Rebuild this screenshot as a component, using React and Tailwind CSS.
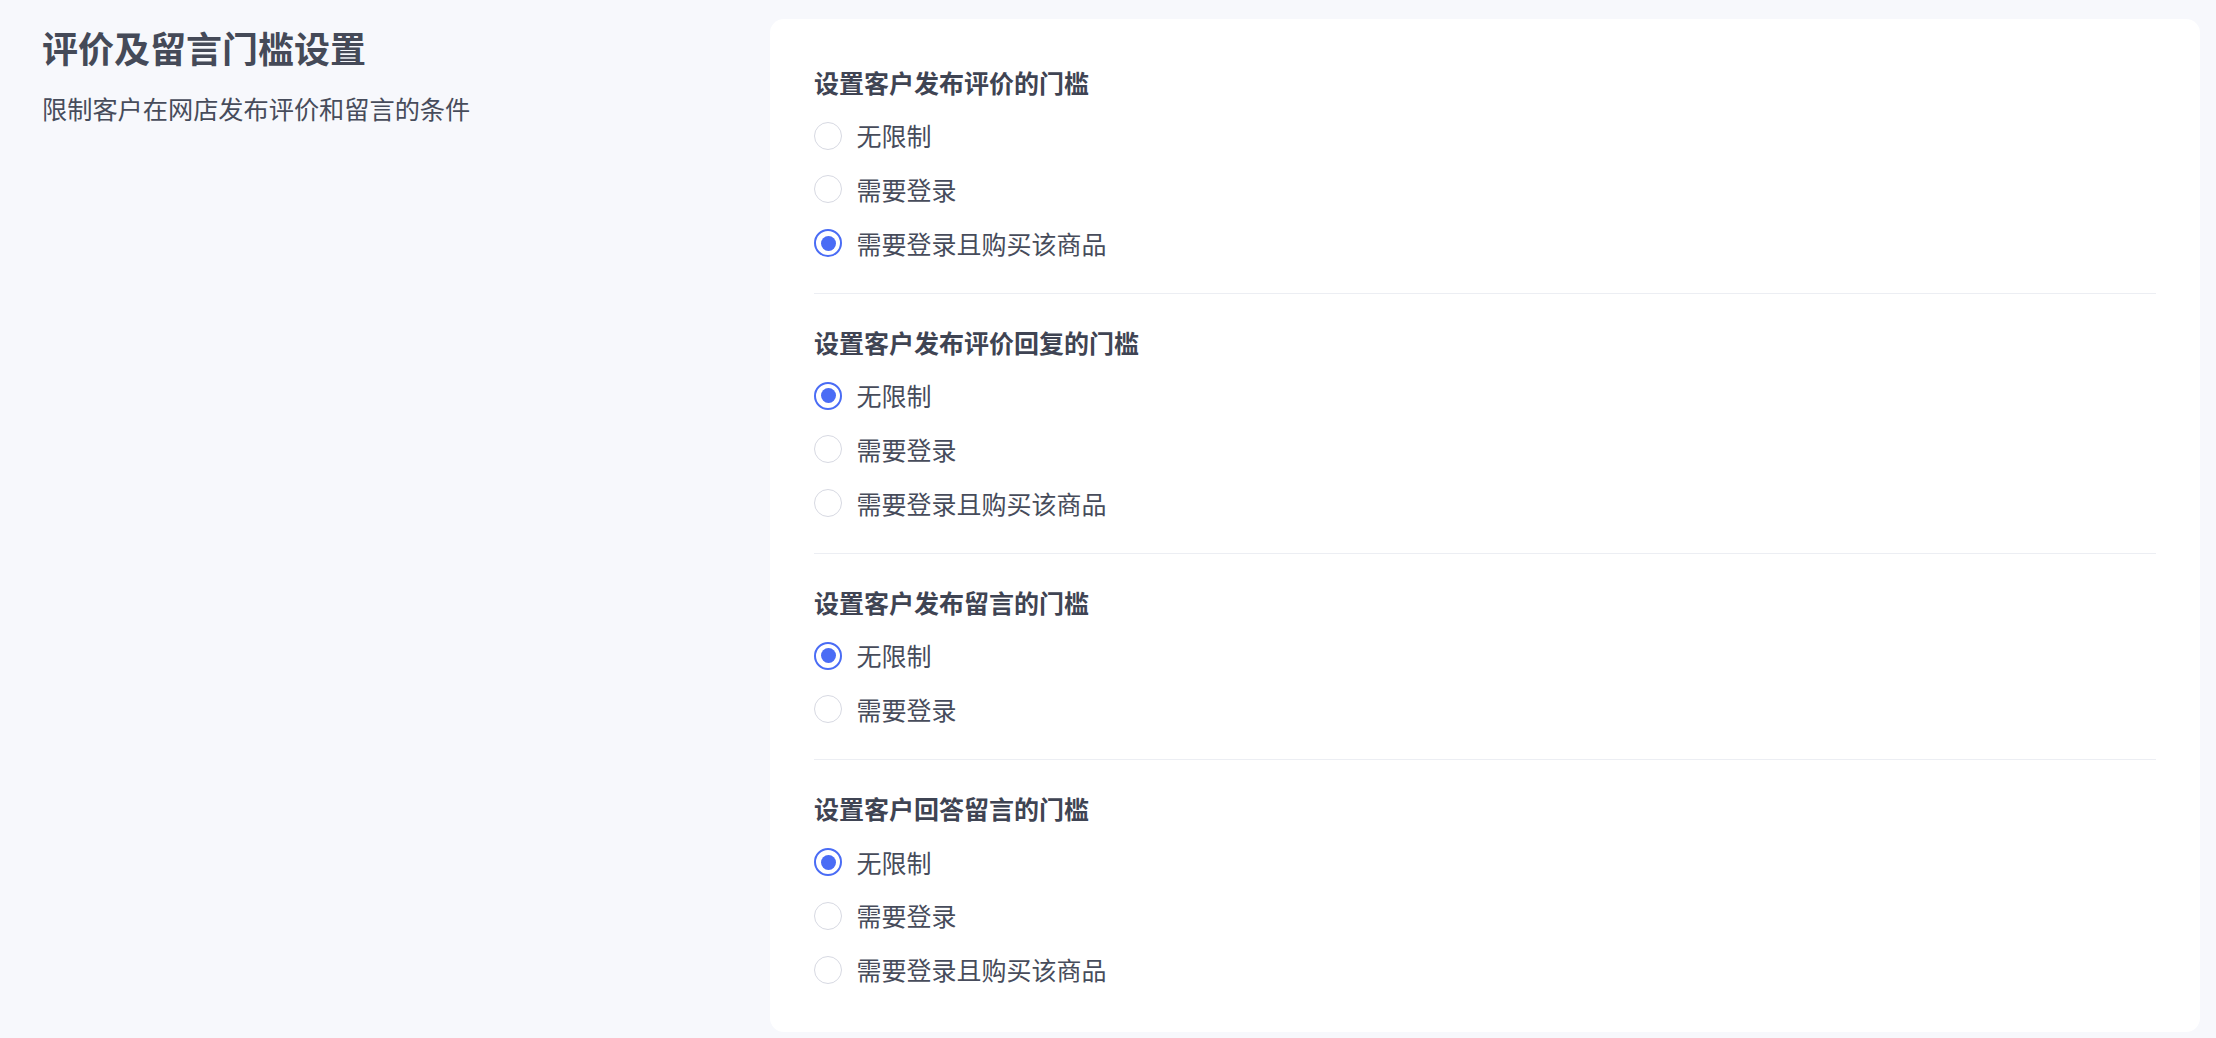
import React, { useState } from 'react';

const font = { fontFamily: '"Noto Sans CJK SC", "Noto Sans", sans-serif' };

const sections = [
  {
    key: 'review',
    title: '设置客户发布评价的门槛',
    options: ['无限制', '需要登录', '需要登录且购买该商品'],
    initial: 2,
  },
  {
    key: 'reviewReply',
    title: '设置客户发布评价回复的门槛',
    options: ['无限制', '需要登录', '需要登录且购买该商品'],
    initial: 0,
  },
  {
    key: 'message',
    title: '设置客户发布留言的门槛',
    options: ['无限制', '需要登录'],
    initial: 0,
  },
  {
    key: 'answer',
    title: '设置客户回答留言的门槛',
    options: ['无限制', '需要登录', '需要登录且购买该商品'],
    initial: 0,
  },
];

const Radio = ({ checked, label, onClick }) => (
  <label
    onClick={onClick}
    className="flex items-center h-[53.7px] cursor-pointer select-none"
  >
    <span
      className={
        checked
          ? 'flex items-center justify-center w-[28px] h-[28px] rounded-full border-[2px] border-[#4a6cf5] bg-white'
          : 'flex items-center justify-center w-[28px] h-[28px] rounded-full border-[1.75px] border-[#d7d9e2] bg-white'
      }
    >
      {checked && <span className="w-[15px] h-[15px] rounded-full bg-[#4a6cf5]" />}
    </span>
    <span className="ml-[14.5px] text-[25px] leading-[35px] text-[#474c5b]">{label}</span>
  </label>
);

export default function App() {
  const [values, setValues] = useState(
    Object.fromEntries(sections.map((s) => [s.key, s.initial]))
  );

  return (
    <div style={font} className="min-h-screen bg-[#f7f8fc] flex pt-[19px] pl-[42px] pr-[16px]">
      {/* Left description */}
      <div className="w-[728px] shrink-0 pt-[3.5px]">
        <h1 className="text-[36px] leading-[49px] font-bold text-[#454a58]">评价及留言门槛设置</h1>
        <p className="mt-[19.8px] text-[25.2px] leading-[35px] text-[#474c5b]">
          限制客户在网店发布评价和留言的条件
        </p>
      </div>

      {/* Settings card */}
      <div className="flex-1 bg-white rounded-[14px] px-[44px] pt-[45.5px] pb-[13px] self-start">
        {sections.map((s, i) => (
          <div
            key={s.key}
            className={
              i < sections.length - 1
                ? 'pb-[22.65px] border-b border-[#eceef3] mb-[31px]'
                : 'pb-[22.65px]'
            }
          >
            <div className="text-[25px] leading-[35px] font-bold text-[#3f4453]">{s.title}</div>
            <div className="mt-[9.35px]">
              {s.options.map((opt, j) => (
                <Radio
                  key={opt}
                  label={opt}
                  checked={values[s.key] === j}
                  onClick={() => setValues({ ...values, [s.key]: j })}
                />
              ))}
            </div>
          </div>
        ))}
      </div>
    </div>
  );
}
